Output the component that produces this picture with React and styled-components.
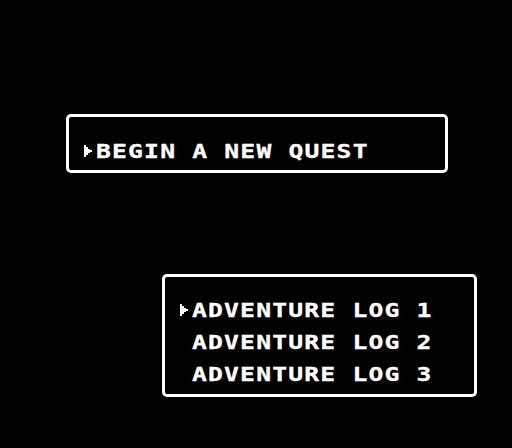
import React from 'react';
import styled, { createGlobalStyle } from 'styled-components';

const GlobalStyle = createGlobalStyle`
  html, body {
    margin: 0;
    padding: 0;
    background: #000;
  }
  body {
    width: 512px;
    height: 448px;
    overflow: hidden;
    font-family: "DejaVu Sans Mono", "Liberation Mono", monospace;
  }
`;

const Screen = styled.div`
  width: 512px;
  height: 448px;
  background: #000;
  display: flex;
  flex-direction: column;
  align-items: flex-start;
`;

const Window = styled.div`
  box-sizing: border-box;
  width: ${(p) => p.$width}px;
  height: ${(p) => p.$height}px;
  margin-top: ${(p) => p.$top}px;
  margin-left: ${(p) => p.$left}px;
  border: 3px solid #fff;
  border-radius: 5px;
  padding: ${(p) => p.$padTop}px 11px 0 11px;
  display: flex;
  flex-direction: column;
`;

const Row = styled.div`
  display: flex;
  align-items: flex-start;
  height: 32px;
`;

const Cursor = styled.span`
  width: 16px;
  height: 32px;
  flex: none;
  display: flex;
  align-items: flex-start;
  justify-content: flex-end;
  padding-top: 10px;
  padding-right: 4px;
  box-sizing: border-box;
  visibility: ${(p) => (p.$on ? 'visible' : 'hidden')};
`;

const Label = styled.span`
  display: inline-block;
  color: #fff;
  font-weight: bold;
  font-size: 19px;
  line-height: 32px;
  letter-spacing: 0.9px;
  white-space: pre;
  -webkit-text-stroke: 0.3px #fff;
  transform: scaleX(1.3);
  transform-origin: left center;
`;

// stepped pixel cursor
function Arrow() {
  return (
    <svg width="8" height="12" viewBox="0 0 8 12" shapeRendering="crispEdges">
      <rect x="0" y="0" width="2" height="12" fill="#fff" />
      <rect x="2" y="2" width="2" height="8" fill="#fff" />
      <rect x="4" y="4" width="2" height="4" fill="#fff" />
      <rect x="6" y="5" width="2" height="2" fill="#fff" />
    </svg>
  );
}

function MenuRow({ text, active }) {
  return (
    <Row>
      <Cursor $on={active}>
        <Arrow />
      </Cursor>
      <Label>{text}</Label>
    </Row>
  );
}

const logs = ['ADVENTURE LOG 1', 'ADVENTURE LOG 2', 'ADVENTURE LOG 3'];

export default function App() {
  return (
    <>
      <GlobalStyle />
      <Screen>
        <Window $left={66} $top={114} $width={382} $height={59} $padTop={18}>
          <MenuRow text="BEGIN A NEW QUEST" active />
        </Window>
        <Window $left={162} $top={101} $width={315} $height={123} $padTop={17}>
          {logs.map((log, i) => (
            <MenuRow key={log} text={log} active={i === 0} />
          ))}
        </Window>
      </Screen>
    </>
  );
}
